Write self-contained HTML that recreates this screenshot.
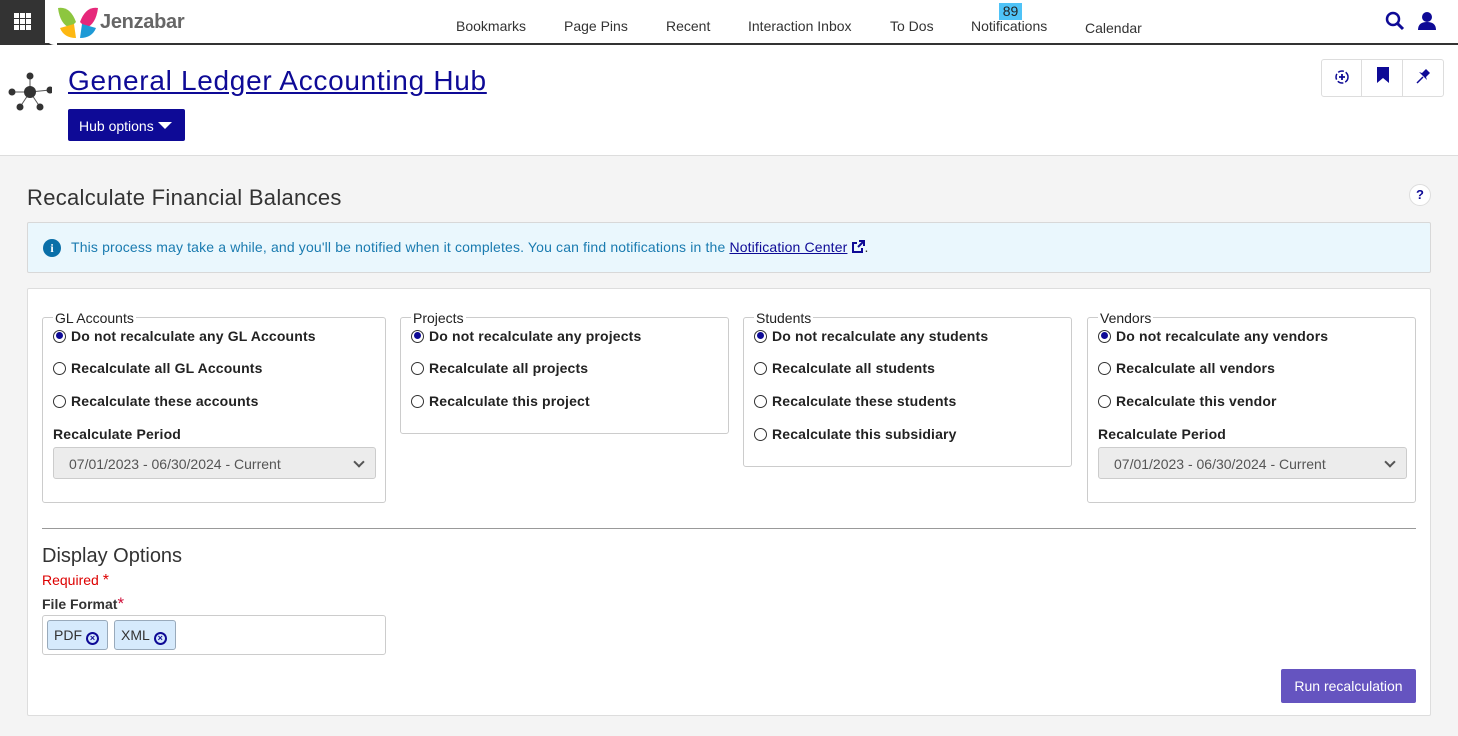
<!DOCTYPE html>
<html><head><meta charset="utf-8">
<style>
*{box-sizing:border-box;margin:0;padding:0}
body{width:1458px;height:736px;overflow:hidden;background:#f4f4f4;font-family:"Liberation Sans",Arial,sans-serif;color:#222;position:relative}
.abs{position:absolute}
.top{left:0;top:0;width:1458px;height:45px;background:#fff;border-bottom:2px solid #333}
.grid{left:0;top:0;width:45px;height:45px;background:#333}
.nav{top:18px;font-size:14px;color:#333}
.hdr{left:0;top:45px;width:1458px;height:111px;background:#fff;border-bottom:1px solid #ddd}
.fs{border:1px solid #ccc;border-radius:3px;position:absolute}
.fs .lg{position:absolute;top:-7px;left:10px;background:#fff;padding:0 2px;font-size:14px;color:#222;line-height:14px}
.opt{position:absolute;left:10px;font-size:14px;font-weight:bold;color:#222;display:flex;align-items:center;white-space:nowrap;letter-spacing:0.15px}
.rad{width:13px;height:13px;border:1.5px solid #333;border-radius:50%;margin-right:5px;display:inline-block;position:relative;background:#fff}
.rad.on:after{content:"";position:absolute;left:1.5px;top:1.5px;width:7px;height:7px;border-radius:50%;background:#0e0a96}
.sel{position:absolute;left:10px;width:323px;height:32px;background:#ececec;border:1px solid #ccc;border-radius:3px;font-size:14px;color:#555;padding:8px 0 0 15px}
.sel:after{content:"";position:absolute;right:12px;top:10px;width:6px;height:6px;border-right:2px solid #555;border-bottom:2px solid #555;transform:rotate(45deg)}
.tag{position:absolute;top:4px;height:30px;background:#d6eafc;border:1px solid #9ab;border-radius:3px;font-size:14px;color:#333;padding:6px 0 0 6px}
.x{display:inline-block;width:13px;height:13px;border:2px solid #0e0a96;border-radius:50%;font-size:9px;line-height:9px;text-align:center;color:#0e0a96;font-weight:bold;vertical-align:-1px;margin-left:4px}
</style></head><body>
<div class="abs top"></div>
<div class="abs grid"><svg width="45" height="45"><g fill="#fff"><rect x="14" y="13" width="5" height="5"/><rect x="20" y="13" width="5" height="5"/><rect x="26" y="13" width="5" height="5"/><rect x="14" y="19" width="5" height="5"/><rect x="20" y="19" width="5" height="5"/><rect x="26" y="19" width="5" height="5"/><rect x="14" y="25" width="5" height="5"/><rect x="20" y="25" width="5" height="5"/><rect x="26" y="25" width="5" height="5"/></g></svg></div>
<div class="abs" style="left:45px;top:0;width:12px;height:45px;background:#fff;border-bottom-left-radius:10px"></div>
<svg class="abs" style="left:56px;top:6px" width="44" height="33"><path d="M2 2 Q14 0 20 16 L14 22 Q4 18 2 2Z" fill="#8dc63f"/><path d="M42 2 Q30 0 24 16 L30 22 Q40 18 42 2Z" fill="#e6287a"/><path d="M4 22 L18 18 L20 32 Q8 32 4 22Z" fill="#fdb813"/><path d="M40 22 L26 18 L24 32 Q36 32 40 22Z" fill="#1e9ad6"/></svg>
<div class="abs" style="left:100px;top:11px;font-size:20px;font-weight:bold;color:#666;letter-spacing:-0.3px">Jenzabar</div>
<div class="abs nav" style="left:456px">Bookmarks</div>
<div class="abs nav" style="left:564px">Page Pins</div>
<div class="abs nav" style="left:666px">Recent</div>
<div class="abs nav" style="left:748px">Interaction Inbox</div>
<div class="abs nav" style="left:890px">To Dos</div>
<div class="abs nav" style="left:971px">Notifications</div>
<div class="abs" style="left:999px;top:3px;width:23px;height:17px;background:#4fc3f7;font-size:14px;text-align:center;color:#222">89</div>
<div class="abs nav" style="left:1085px;top:20px">Calendar</div>
<svg class="abs" style="left:1385px;top:11px" width="20" height="20"><circle cx="8" cy="8" r="6" stroke="#0e0a96" stroke-width="2.5" fill="none"/><path d="M12 12 L18 18" stroke="#0e0a96" stroke-width="3"/></svg>
<svg class="abs" style="left:1417px;top:11px" width="20" height="20"><circle cx="10" cy="6" r="5" fill="#0e0a96"/><path d="M1 19 Q1 11 10 11 Q19 11 19 19Z" fill="#0e0a96"/></svg>
<div class="abs hdr"></div>
<svg class="abs" style="left:8px;top:72px" width="44" height="40"><g stroke="#555" stroke-width="1"><line x1="22" y1="20" x2="22" y2="4"/><line x1="22" y1="20" x2="4" y2="20"/><line x1="22" y1="20" x2="42" y2="18"/><line x1="22" y1="20" x2="12" y2="35"/><line x1="22" y1="20" x2="32" y2="35"/></g><g fill="#333"><circle cx="22" cy="20" r="6"/><circle cx="22" cy="4" r="3.5"/><circle cx="4" cy="20" r="3.5"/><circle cx="42" cy="18" r="3.5"/><circle cx="12" cy="35" r="3.5"/><circle cx="32" cy="35" r="3.5"/></g></svg>
<div class="abs" style="left:68px;top:65px;font-size:28px;text-decoration:underline;color:#0e0a96;letter-spacing:0.7px">General Ledger Accounting Hub</div>
<div class="abs" style="left:68px;top:109px;width:117px;height:32px;background:#0e0a96;border-radius:2px;color:#fff;font-size:14px;padding:9px 0 0 11px">Hub options <span style="display:inline-block;width:0;height:0;border-left:7px solid transparent;border-right:7px solid transparent;border-top:7px solid #fff;vertical-align:2px"></span></div>
<div class="abs" style="left:1321px;top:59px;width:123px;height:38px;border:1px solid #ddd;border-radius:3px;background:#fff"></div>
<div class="abs" style="left:1361px;top:60px;width:1px;height:36px;background:#ddd"></div>
<div class="abs" style="left:1402px;top:60px;width:1px;height:36px;background:#ddd"></div>
<svg class="abs" style="left:1333px;top:68px" width="18" height="18"><circle cx="9" cy="9" r="6" stroke="#0e0a96" stroke-width="1.5" fill="none" stroke-dasharray="6 2"/><path d="M9 6v6M6 9h6" stroke="#0e0a96" stroke-width="1.8"/></svg>
<svg class="abs" style="left:1376px;top:67px" width="14" height="17"><path d="M1 0h12v16l-6-5-6 5z" fill="#0e0a96"/></svg>
<svg class="abs" style="left:1414px;top:67px" width="18" height="18"><path d="M3 16 L9 10" stroke="#0e0a96" stroke-width="1.5"/><path d="M8 6 L12 2 L16 6 L12 10 L13 13 L5 5Z" fill="#0e0a96"/></svg>
<div class="abs" style="left:27px;top:185px;font-size:22px;color:#333;letter-spacing:0.3px">Recalculate Financial Balances</div>
<div class="abs" style="left:1409px;top:184px;width:22px;height:22px;border:1px solid #ddd;border-radius:50%;background:#fff;font-size:13px;font-weight:bold;color:#0e0a96;text-align:center;line-height:20px">?</div>
<div class="abs" style="left:27px;top:222px;width:1404px;height:51px;background:#eaf7fd;border:1px solid #d8d8d8;border-radius:2px"></div>
<div class="abs" style="left:43px;top:239px;width:18px;height:18px;border-radius:50%;background:#0a6fa8;color:#fff;font-size:12px;font-weight:bold;text-align:center;line-height:18px;font-family:'Liberation Serif',serif">i</div>
<div class="abs" style="left:71px;top:239px;font-size:14px;color:#1a7bb0;letter-spacing:0.15px">This process may take a while, and you'll be notified when it completes. You can find notifications in the <span style="color:#0e0a96;text-decoration:underline">Notification Center</span> <svg width="13" height="13" style="vertical-align:-1px"><path d="M10 8v4H1V3h4" stroke="#0e0a96" stroke-width="2" fill="none"/><path d="M7 1h5v5M12 1L6 7" stroke="#0e0a96" stroke-width="2" fill="none"/></svg><span style="color:#333">.</span></div>
<div class="abs" style="left:27px;top:288px;width:1404px;height:428px;background:#fff;border:1px solid #ddd;border-radius:2px"></div>

<div class="fs" style="left:42px;top:317px;width:344px;height:186px"><div class="lg">GL Accounts</div>
<div class="opt" style="top:10px"><span class="rad on"></span>Do not recalculate any GL Accounts</div>
<div class="opt" style="top:42px"><span class="rad"></span>Recalculate all GL Accounts</div>
<div class="opt" style="top:75px"><span class="rad"></span>Recalculate these accounts</div>
<div class="opt" style="top:108px">Recalculate Period</div>
<div class="sel" style="top:129px">07/01/2023 - 06/30/2024 - Current</div></div>

<div class="fs" style="left:400px;top:317px;width:329px;height:117px"><div class="lg">Projects</div>
<div class="opt" style="top:10px"><span class="rad on"></span>Do not recalculate any projects</div>
<div class="opt" style="top:42px"><span class="rad"></span>Recalculate all projects</div>
<div class="opt" style="top:75px"><span class="rad"></span>Recalculate this project</div></div>

<div class="fs" style="left:743px;top:317px;width:329px;height:150px"><div class="lg">Students</div>
<div class="opt" style="top:10px"><span class="rad on"></span>Do not recalculate any students</div>
<div class="opt" style="top:42px"><span class="rad"></span>Recalculate all students</div>
<div class="opt" style="top:75px"><span class="rad"></span>Recalculate these students</div>
<div class="opt" style="top:108px"><span class="rad"></span>Recalculate this subsidiary</div></div>

<div class="fs" style="left:1087px;top:317px;width:329px;height:186px"><div class="lg">Vendors</div>
<div class="opt" style="top:10px"><span class="rad on"></span>Do not recalculate any vendors</div>
<div class="opt" style="top:42px"><span class="rad"></span>Recalculate all vendors</div>
<div class="opt" style="top:75px"><span class="rad"></span>Recalculate this vendor</div>
<div class="opt" style="top:108px">Recalculate Period</div>
<div class="sel" style="top:129px;width:309px">07/01/2023 - 06/30/2024 - Current</div></div>

<div class="abs" style="left:42px;top:528px;width:1374px;height:1px;background:#999"></div>
<div class="abs" style="left:42px;top:545px;font-size:20px;color:#333">Display Options</div>
<div class="abs" style="left:42px;top:572px;font-size:14px;color:#d00">Required <span style="font-size:16px">*</span></div>
<div class="abs" style="left:42px;top:594px;font-size:14px;font-weight:bold;color:#333">File Format<span style="color:#d0103a;font-size:17px;font-weight:normal">*</span></div>
<div class="abs" style="left:42px;top:615px;width:344px;height:40px;border:1px solid #ccc;border-radius:3px;background:#fff">
<div class="tag" style="left:4px;width:61px">PDF<span class="x">×</span></div>
<div class="tag" style="left:71px;width:62px">XML<span class="x">×</span></div></div>
<div class="abs" style="left:1281px;top:669px;width:135px;height:34px;background:#6554c0;border-radius:2px;color:#fff;font-size:14px;text-align:center;line-height:34px">Run recalculation</div>
</body></html>
